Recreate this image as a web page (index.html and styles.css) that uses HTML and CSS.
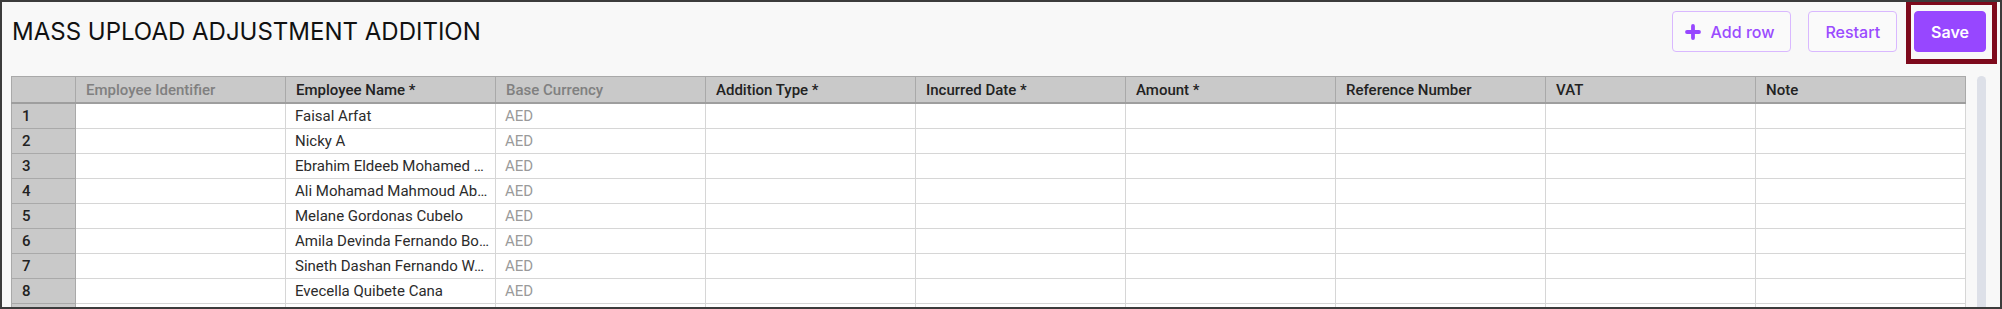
FILE: index.html
```html
<!DOCTYPE html>
<html lang="en">
  <head>
    <meta charset="UTF-8" />
    <meta name="viewport" content="width=device-width, initial-scale=1.0" />
    <title>Mass Upload Adjustment Addition</title>
    <link rel="stylesheet" href="styles.css">
  </head>
  <body>
    <div class="frame">
      <div class="topbar">
        <h1 class="title">MASS UPLOAD ADJUSTMENT ADDITION</h1>
        <div class="actions">
          <button class="btn btn-outline btn-add">
            <svg class="plus" width="16" height="16" viewBox="0 0 16 16">
              <path d="M8 2v12M2 8h12" stroke="currentColor" stroke-width="3.8" stroke-linecap="round" />
            </svg>
            Add row
          </button>
          <button class="btn btn-outline">Restart</button>
          <button class="btn btn-primary">Save</button>
        </div>
        <div class="highlight"></div>
      </div>
      <div class="sheet-area">
        <div class="sheet">
          <table class="grid">
            <colgroup>
              <col class="col-num" />
              <col class="col" /><col class="col" /><col class="col" />
              <col class="col" /><col class="col" /><col class="col" />
              <col class="col" /><col class="col" /><col class="col" />
            </colgroup>
            <thead>
              <tr>
                <th></th>
                <th class="muted">Employee Identifier</th>
                <th>Employee Name *</th>
                <th class="muted">Base Currency</th>
                <th>Addition Type *</th>
                <th>Incurred Date *</th>
                <th>Amount *</th>
                <th>Reference Number</th>
                <th>VAT</th>
                <th>Note</th>
              </tr>
            </thead>
            <tbody id="rows"></tbody>
          </table>
        </div>
        <div class="scrollbar"></div>
      </div>
    </div>
    <script>
      // names are already cut the way the grid shows them
      const names = [
        "Faisal Arfat",
        "Nicky A",
        "Ebrahim Eldeeb Mohamed …",
        "Ali Mohamad Mahmoud Ab…",
        "Melane Gordonas Cubelo",
        "Amila Devinda Fernando Bo…",
        "Sineth Dashan Fernando W…",
        "Evecella Quibete Cana"
      ];

      const tbody = document.getElementById("rows");

      function addRow(num, name, currency) {
        const tr = document.createElement("tr");
        let html = "<td class='num'>" + num + "</td><td></td>";
        html += "<td>" + name + "</td><td class='muted'>" + currency + "</td>";
        for (let c = 0; c < 6; c++) {
          html += "<td></td>";
        }
        tr.innerHTML = html;
        tbody.appendChild(tr);
      }

      names.forEach(function (name, i) {
        addRow(i + 1, name, "AED");
      });
      // next row peeks out under the fold
      addRow("", "", "");
    </script>
  </body>
</html>
```

FILE: styles.css
```css
body {
  margin: 0;
  padding: 0;
  font-family: Roboto, "Liberation Sans", sans-serif;
}

.frame {
  position: relative;
  width: 2002px;
  height: 309px;
  box-sizing: border-box;
  border: 2px solid #3c3c3c;
  background-color: #f8f8f8;
  overflow: hidden;
}

.topbar {
  display: flex;
  align-items: center;
  justify-content: space-between;
  height: 41px;
  padding: 9px 14px 0 10px;
}

.title {
  margin: 0;
  font-family: Inter, "Liberation Sans", sans-serif;
  font-size: 24px;
  font-weight: 400;
  color: #111;
  letter-spacing: 0;
}

.actions {
  display: flex;
  gap: 17px;
  height: 41px;
}

.btn {
  display: flex;
  align-items: center;
  gap: 10px;
  height: 41px;
  padding: 0 16px;
  font-family: Inter, "Liberation Sans", sans-serif;
  font-size: 16px;
  font-weight: 500;
  border-radius: 4px;
  cursor: pointer;
}

.btn-outline {
  background-color: #fafafa;
  border: 1px solid #d9b8ff;
  color: #9a4bff;
}

.btn-add {
  padding: 0 16px 0 12px;
}

.btn-primary {
  background-color: #9747ff;
  border: 1px solid #9747ff;
  color: #fff;
  font-weight: 600;
  padding: 0 16px;
}

.plus {
  color: #9747ff;
}

.highlight {
  position: absolute;
  top: -2px;
  right: 3px;
  width: 91px;
  height: 64px;
  box-sizing: border-box;
  border: 5px solid #7d0a1c;
  pointer-events: none;
}

.sheet-area {
  display: flex;
  gap: 12px;
  padding: 24px 0 0 9px;
}

.sheet {
  width: 1954px;
}

.grid {
  border-collapse: collapse;
  table-layout: fixed;
  width: 1954px;
  font-size: 15px;
  color: #2b2b2b;
}

.col-num {
  width: 64px;
}

.col {
  width: 210px;
}

.grid th {
  height: 25px;
  padding: 0 10px;
  background-color: #c9c9c9;
  border: 1px solid #a9a9a9;
  border-bottom: 2px solid #9e9e9e;
  text-align: left;
  font-weight: 500;
  color: #222;
  white-space: nowrap;
}

.grid th.muted {
  color: #808080;
}

.grid td {
  height: 24px;
  padding: 0 2px 0 9px;
  background-color: #fff;
  border: 1px solid #d6d6d6;
  white-space: nowrap;
  overflow: hidden;
}

.grid td.num {
  background-color: #c9c9c9;
  border-color: #a9a9a9;
  padding-left: 10px;
  font-weight: 500;
  color: #222;
}

.grid td.muted {
  color: #9a9a9a;
}

.scrollbar {
  width: 9px;
  height: 260px;
  border-radius: 5px;
  background-color: #dde0e8;
}
```
